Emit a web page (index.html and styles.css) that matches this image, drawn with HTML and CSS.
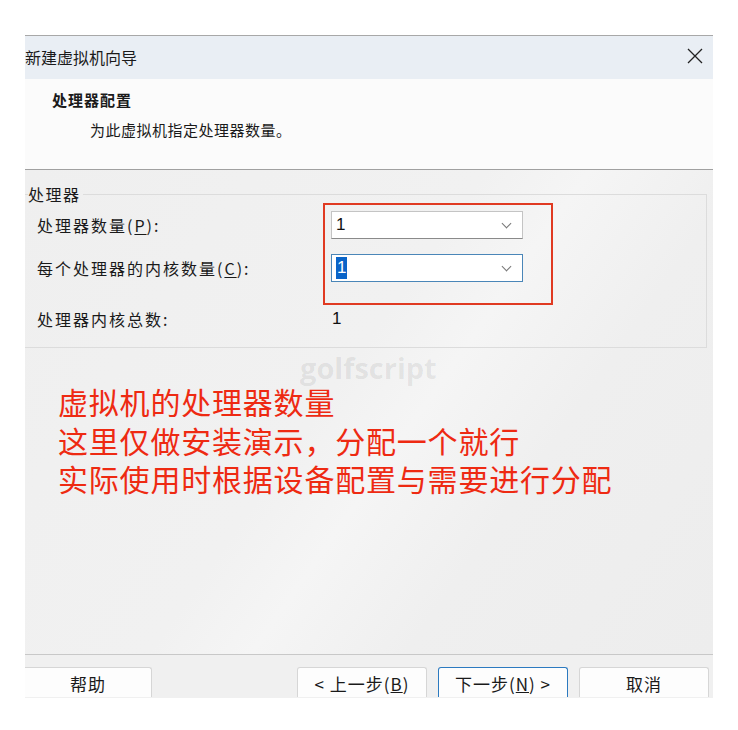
FILE: index.html
```html
<!DOCTYPE html>
<html lang="zh-CN">
<head>
  <meta charset="UTF-8">
  <title>新建虚拟机向导</title>
  <link rel="stylesheet" href="styles.css">
</head>
<body>
  <div class="wizard">
    <div class="titlebar">
      <span class="title">新建虚拟机向导</span>
      <svg class="close" width="16" height="16" viewBox="0 0 16 16">
        <path d="M1 1 L15 15 M15 1 L1 15" stroke="#222" stroke-width="1.3" fill="none"/>
      </svg>
    </div>

    <div class="header">
      <div class="h-title">处理器配置</div>
      <div class="h-sub">为此虚拟机指定处理器数量。</div>
    </div>

    <div class="content">
      <fieldset class="group">
        <legend>处理器</legend>
        <div class="row">
          <span class="label">处理器数量(<u>P</u>):</span>
          <div class="combo"><span class="val">1</span><span class="arrow"></span></div>
        </div>
        <div class="row row-2">
          <span class="label">每个处理器的内核数量(<u>C</u>):</span>
          <div class="combo focused"><span class="val selected">1</span><span class="arrow"></span></div>
        </div>
        <div class="row row-3">
          <span class="label">处理器内核总数:</span>
          <span class="val total">1</span>
        </div>
      </fieldset>

      <div class="note">
        <div>虚拟机的处理器数量</div>
        <div>这里仅做安装演示，分配一个就行</div>
        <div>实际使用时根据设备配置与需要进行分配</div>
      </div>

      <div class="mark">golfscript</div>
      <div class="highlight"></div>
    </div>

    <div class="footer">
      <button class="btn btn-help">帮助</button>
      <span class="spacer"></span>
      <button class="btn">&lt; 上一步(<u>B</u>)</button>
      <button class="btn btn-default">下一步(<u>N</u>) &gt;</button>
      <button class="btn">取消</button>
    </div>
  </div>
</body>
</html>
```

FILE: styles.css
```css
body {
  margin: 0;
  background: #ffffff;
  font-family: "Noto Sans CJK SC", "Liberation Sans", sans-serif;
  color: #1a1a1a;
}
.wizard {
  position: relative;
  margin: 35px 0 0 25px;
  width: 688px;
  height: 662px;
  overflow: hidden;
  background: #f0f0f0;
  border-top: 1px solid #a8a8a8;
}
.titlebar {
  height: 43px;
  background: #e9eef4;
  display: flex;
  align-items: center;
  justify-content: space-between;
}
.title {
  font-size: 16px;
  margin-top: -1px;
}
.close {
  margin-right: 10px;
  margin-top: -4px;
}
.header {
  height: 91px;
  box-sizing: border-box;
  background: #fbfbfb;
  border-bottom: 1px solid #a0a0a0;
}
.h-title {
  font-size: 15px;
  font-weight: bold;
  line-height: 20px;
  padding: 11px 0 0 27px;
  letter-spacing: 1px;
}
.h-sub {
  font-size: 15px;
  line-height: 20px;
  padding: 10px 0 0 65px;
  letter-spacing: 0.5px;
}
.content {
  height: 484px;
  background: linear-gradient(125deg, #efefef 0%, #f1f1f1 45%, #f5f5f5 55%, #efefef 70%, #ededed 100%);
  overflow: hidden;
}
.group {
  margin: 14px 6px 0 0;
  padding: 7px 0 14px 0;
  border: 1px solid #dcdcdc;
  border-left: none;
}
.group legend {
  font-size: 16px;
  line-height: 20px;
  padding: 0 2px 0 0;
  margin-left: 3px;
  letter-spacing: 1.5px;
}
.row {
  display: flex;
  align-items: center;
  height: 28px;
  padding-left: 12px;
}
.row-2 {
  margin-top: 15px;
}
.row-3 {
  margin-top: 23px;
}
.label {
  width: 294px;
  font-size: 16px;
  letter-spacing: 2px;
}
.label u {
  text-underline-offset: 2px;
}
.combo {
  width: 192px;
  height: 28px;
  box-sizing: border-box;
  background: #ffffff;
  border: 1px solid #c4c4c4;
  border-bottom-color: #8a8a8a;
  display: flex;
  align-items: center;
  justify-content: space-between;
  padding: 0 12px 0 4px;
}
.combo.focused {
  border-color: #4a86b8;
}
.val {
  font-family: "Liberation Sans", sans-serif;
  font-size: 17px;
  line-height: 22px;
  color: #111;
}
.val.selected {
  background: #0a64c8;
  color: #ffffff;
  padding: 0 1px;
}
.val.total {
  margin-left: 1px;
}
.arrow {
  width: 6px;
  height: 6px;
  border-right: 1px solid #777;
  border-bottom: 1px solid #777;
  transform: rotate(45deg);
  margin-top: -4px;
}
.note {
  margin-top: 34px;
  padding-left: 33px;
  font-size: 30px;
  line-height: 38.5px;
  color: #ee2a12;
  letter-spacing: 0.8px;
}
.mark {
  position: absolute;
  left: 275px;
  top: 312px;
  font-family: "Open Sans", sans-serif;
  font-weight: bold;
  font-size: 29px;
  color: rgba(0, 0, 0, 0.08);
}
.highlight {
  position: absolute;
  left: 298px;
  top: 167px;
  width: 230px;
  height: 102px;
  box-sizing: border-box;
  border: 2px solid #e03a22;
}
.footer {
  border-top: 1px solid #c8c8c8;
  padding-top: 12px;
  display: flex;
  gap: 11px;
  padding-right: 4px;
  background: #f0f0f0;
}
.btn {
  width: 130px;
  height: 30px;
  background: #fdfdfd;
  border: 1px solid #d6d6d6;
  border-bottom: none;
  border-radius: 3px 3px 0 0;
  font-family: "Noto Sans CJK SC", "Liberation Sans", sans-serif;
  font-size: 17px;
  line-height: 22px;
  letter-spacing: 1px;
  color: #1a1a1a;
  padding: 2px 0 0 0;
  align-self: flex-start;
}
.btn-help {
  width: 127px;
  border-left: none;
  border-radius: 0 3px 0 0;
}
.btn-default {
  border-color: #2c7ac0;
}
.spacer {
  flex: 1;
}
```
